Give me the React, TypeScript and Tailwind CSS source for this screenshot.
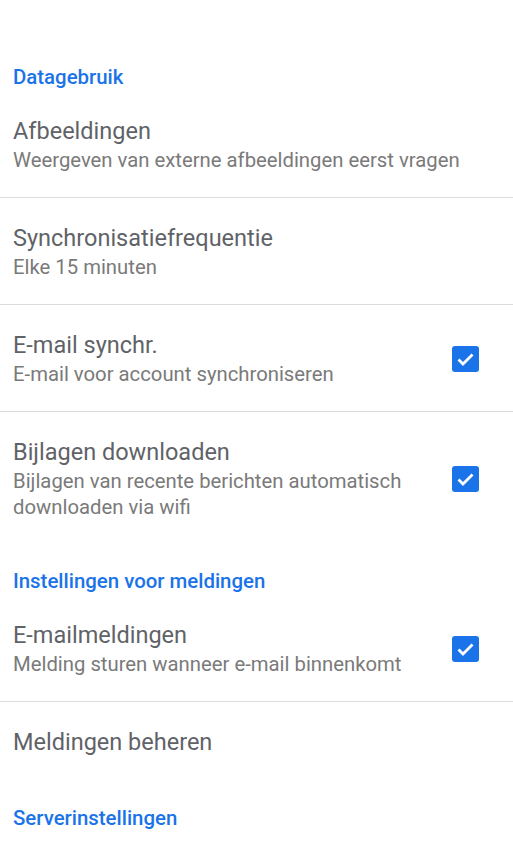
import React from "react";

type Row = {
  title: string;
  subtitle?: string;
  checked?: boolean;
  divider?: boolean;
};

function Check() {
  return (
    <svg width="27" height="26" viewBox="0 0 27 26" className="shrink-0">
      <rect x="0" y="0" width="27" height="26" rx="3" fill="#1a73e8" />
      <path d="M6.5 13.5 L11 18 L20.5 8.5" stroke="#fff" strokeWidth="2.8" fill="none" />
    </svg>
  );
}

function Header({ children }: { children: React.ReactNode }) {
  return (
    <div className="pt-[24px] pl-[13px] text-[20.4px] leading-[27px] font-medium text-[#1a73e8]">
      {children}
    </div>
  );
}

function SettingRow({ title, subtitle, checked, divider }: Row) {
  return (
    <div className={"flex items-center pl-[13px] pr-[34px] pt-[25px] pb-[24px] " + (divider ? "border-b border-[#dcdcdc]" : "")}>
      <div className="flex-1 min-w-0 pr-4">
        <div className="text-[23.5px] leading-[30px] text-[#5f6368]">{title}</div>
        {subtitle && (
          <div className="mt-px text-[20.3px] leading-[26px] text-[#7a7a7a]">{subtitle}</div>
        )}
      </div>
      {checked && <Check />}
    </div>
  );
}

export default function App() {
  return (
    <div className="w-[513px] h-[852px] bg-white pt-10 overflow-hidden" style={{ fontFamily: "Roboto, 'Noto Sans', sans-serif" }}>
      <Header>Datagebruik</Header>
      <SettingRow title="Afbeeldingen" subtitle="Weergeven van externe afbeeldingen eerst vragen" divider />
      <SettingRow title="Synchronisatiefrequentie" subtitle="Elke 15 minuten" divider />
      <SettingRow title="E-mail synchr." subtitle="E-mail voor account synchroniseren" checked divider />
      <SettingRow title="Bijlagen downloaden" subtitle="Bijlagen van recente berichten automatisch downloaden via wifi" checked />
      <Header>Instellingen voor meldingen</Header>
      <SettingRow title="E-mailmeldingen" subtitle="Melding sturen wanneer e-mail binnenkomt" checked divider />
      <SettingRow title="Meldingen beheren" />
      <Header>Serverinstellingen</Header>
    </div>
  );
}
